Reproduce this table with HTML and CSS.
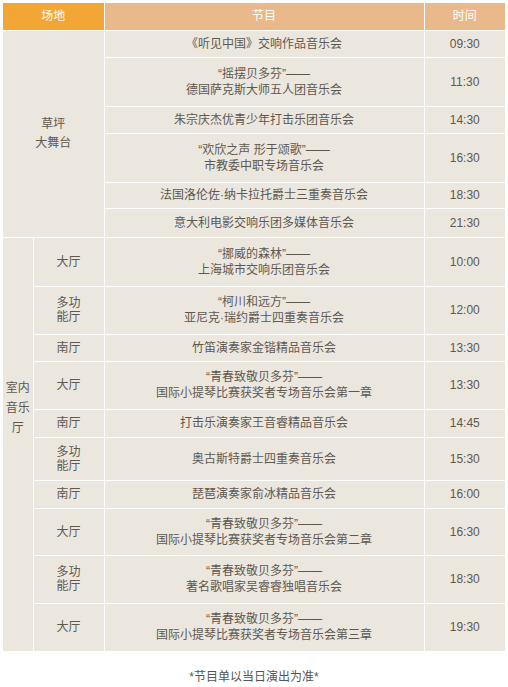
FILE: index.html
```html
<!DOCTYPE html>
<html lang="zh">
<head>
<meta charset="utf-8">
<title>节目单</title>
<link rel="stylesheet" href="styles.css">
</head>
<body>
<div class="page">
<table class="sched">
<colgroup>
<col class="c-venue"><col class="c-sub"><col class="c-prog"><col class="c-time">
</colgroup>
<thead>
<tr class="h27">
<th colspan="2" class="th-venue">场地</th>
<th class="th-other">节目</th>
<th class="th-other">时间</th>
</tr>
</thead>
<tbody>
<tr class="h27">
<td colspan="2" rowspan="6" class="venue lawn">草坪<br>大舞台</td>
<td>《听见中国》交响作品音乐会</td><td>09:30</td>
</tr>
<tr class="h49"><td>“摇摆贝多芬”——<br>德国萨克斯大师五人团音乐会</td><td>11:30</td></tr>
<tr class="h27"><td>朱宗庆杰优青少年打击乐团音乐会</td><td>14:30</td></tr>
<tr class="h49"><td>“欢欣之声 形于颂歌”——<br>市教委中职专场音乐会</td><td>16:30</td></tr>
<tr class="h26"><td>法国洛伦佐·纳卡拉托爵士三重奏音乐会</td><td>18:30</td></tr>
<tr class="h29"><td>意大利电影交响乐团多媒体音乐会</td><td>21:30</td></tr>

<tr class="h49">
<td rowspan="10" class="venue indoor">室内<br>音乐<br>厅</td>
<td class="sub">大厅</td>
<td>“挪威的森林”——<br>上海城市交响乐团音乐会</td><td>10:00</td>
</tr>
<tr class="h48"><td class="sub tight">多功<br>能厅</td><td>“柯川和远方”——<br>亚尼克·瑞约爵士四重奏音乐会</td><td>12:00</td></tr>
<tr class="h27"><td class="sub">南厅</td><td>竹笛演奏家金锴精品音乐会</td><td>13:30</td></tr>
<tr class="h48"><td class="sub">大厅</td><td>“青春致敬贝多芬”——<br>国际小提琴比赛获奖者专场音乐会第一章</td><td>13:30</td></tr>
<tr class="h28"><td class="sub">南厅</td><td>打击乐演奏家王音睿精品音乐会</td><td>14:45</td></tr>
<tr class="h43"><td class="sub tight">多功<br>能厅</td><td>奥古斯特爵士四重奏音乐会</td><td>15:30</td></tr>
<tr class="h28"><td class="sub">南厅</td><td>琵琶演奏家俞冰精品音乐会</td><td>16:00</td></tr>
<tr class="h47"><td class="sub">大厅</td><td>“青春致敬贝多芬”——<br>国际小提琴比赛获奖者专场音乐会第二章</td><td>16:30</td></tr>
<tr class="h48"><td class="sub tight">多功<br>能厅</td><td>“青春致敬贝多芬”——<br>著名歌唱家吴睿睿独唱音乐会</td><td>18:30</td></tr>
<tr class="h48"><td class="sub">大厅</td><td>“青春致敬贝多芬”——<br>国际小提琴比赛获奖者专场音乐会第三章</td><td>19:30</td></tr>
</tbody>
</table>
<p class="note">*节目单以当日演出为准*</p>
</div>
</body>
</html>
```

FILE: styles.css
```css
html, body {
  margin: 0;
  padding: 0;
  background: #ffffff;
}

.page {
  padding: 3px 3px 0 3px;
  font-family: "Liberation Sans", "Noto Sans CJK SC", sans-serif;
  font-size: 12px;
  color: #5e5850;
}

.sched {
  width: 502px;
  table-layout: fixed;
  border-collapse: collapse;
  background: #ebe7df;
}

.c-venue { width: 30px; }
.c-sub { width: 71px; }
.c-prog { width: 320px; }
.c-time { width: 81px; }

.sched th,
.sched td {
  border: 1px solid #ffffff;
  padding: 0;
  text-align: center;
  vertical-align: middle;
  line-height: 16px;
  font-weight: normal;
}

.sched thead th {
  color: #ffffff;
  border-top: none;
}

.th-venue {
  background: #f3a535;
}

.th-other {
  background: #e9b98b;
}

.sched tr > :first-child { border-left: none; }
.sched tr > :last-child { border-right: none; }
.sched tbody tr:last-child td { border-bottom: none; }

.venue.lawn { line-height: 19px; }
.venue.indoor {
  line-height: 20px;
  border-bottom: none;
  padding-bottom: 72px;
}
.sub.tight { line-height: 14px; }

.h26 { height: 26px; }
.h27 { height: 27px; }
.h28 { height: 28px; }
.h29 { height: 29px; }
.h43 { height: 43px; }
.h47 { height: 47px; }
.h48 { height: 48px; }
.h49 { height: 49px; }

.note {
  margin: 18px 0 0 0;
  text-align: center;
  line-height: 16px;
  color: #555555;
}
```
